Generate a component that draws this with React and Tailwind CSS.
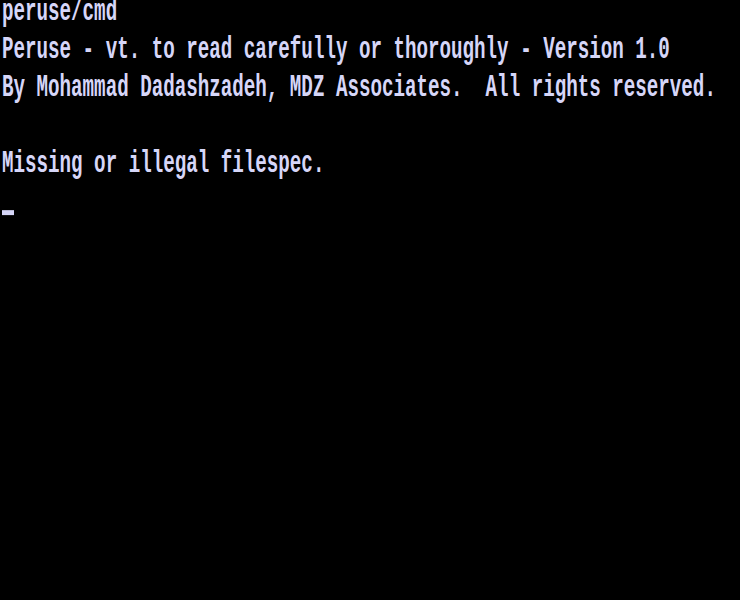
import React from 'react';

const lines = [
    'peruse/cmd',
    'Peruse - vt. to read carefully or thoroughly - Version 1.0',
    'By Mohammad Dadashzadeh, MDZ Associates.  All rights reserved.',
    '',
    'Missing or illegal filespec.',
];

export default function App() {
    return (
        <div className="w-[740px] h-[600px] bg-black overflow-hidden">
            {/* TRS-80 style screen: narrow mono glyphs stretched tall */}
            <div
                className="pl-[2px] -mt-[6px] origin-top scale-y-[1.65] text-[#d6d6f8] text-[19.2px] leading-[23.03px] font-bold whitespace-pre"
                style={{ fontFamily: '"Liberation Mono", "DejaVu Sans Mono", monospace' }}
            >
                {lines.map((line, i) => (
                    <div key={i} className="h-[23.03px]">{line}</div>
                ))}
                <div className="h-[23.03px]">
                    <span className="inline-block w-[12px] h-[3px] bg-[#d6d6f8] translate-y-[3px]" />
                </div>
            </div>
        </div>
    );
}
